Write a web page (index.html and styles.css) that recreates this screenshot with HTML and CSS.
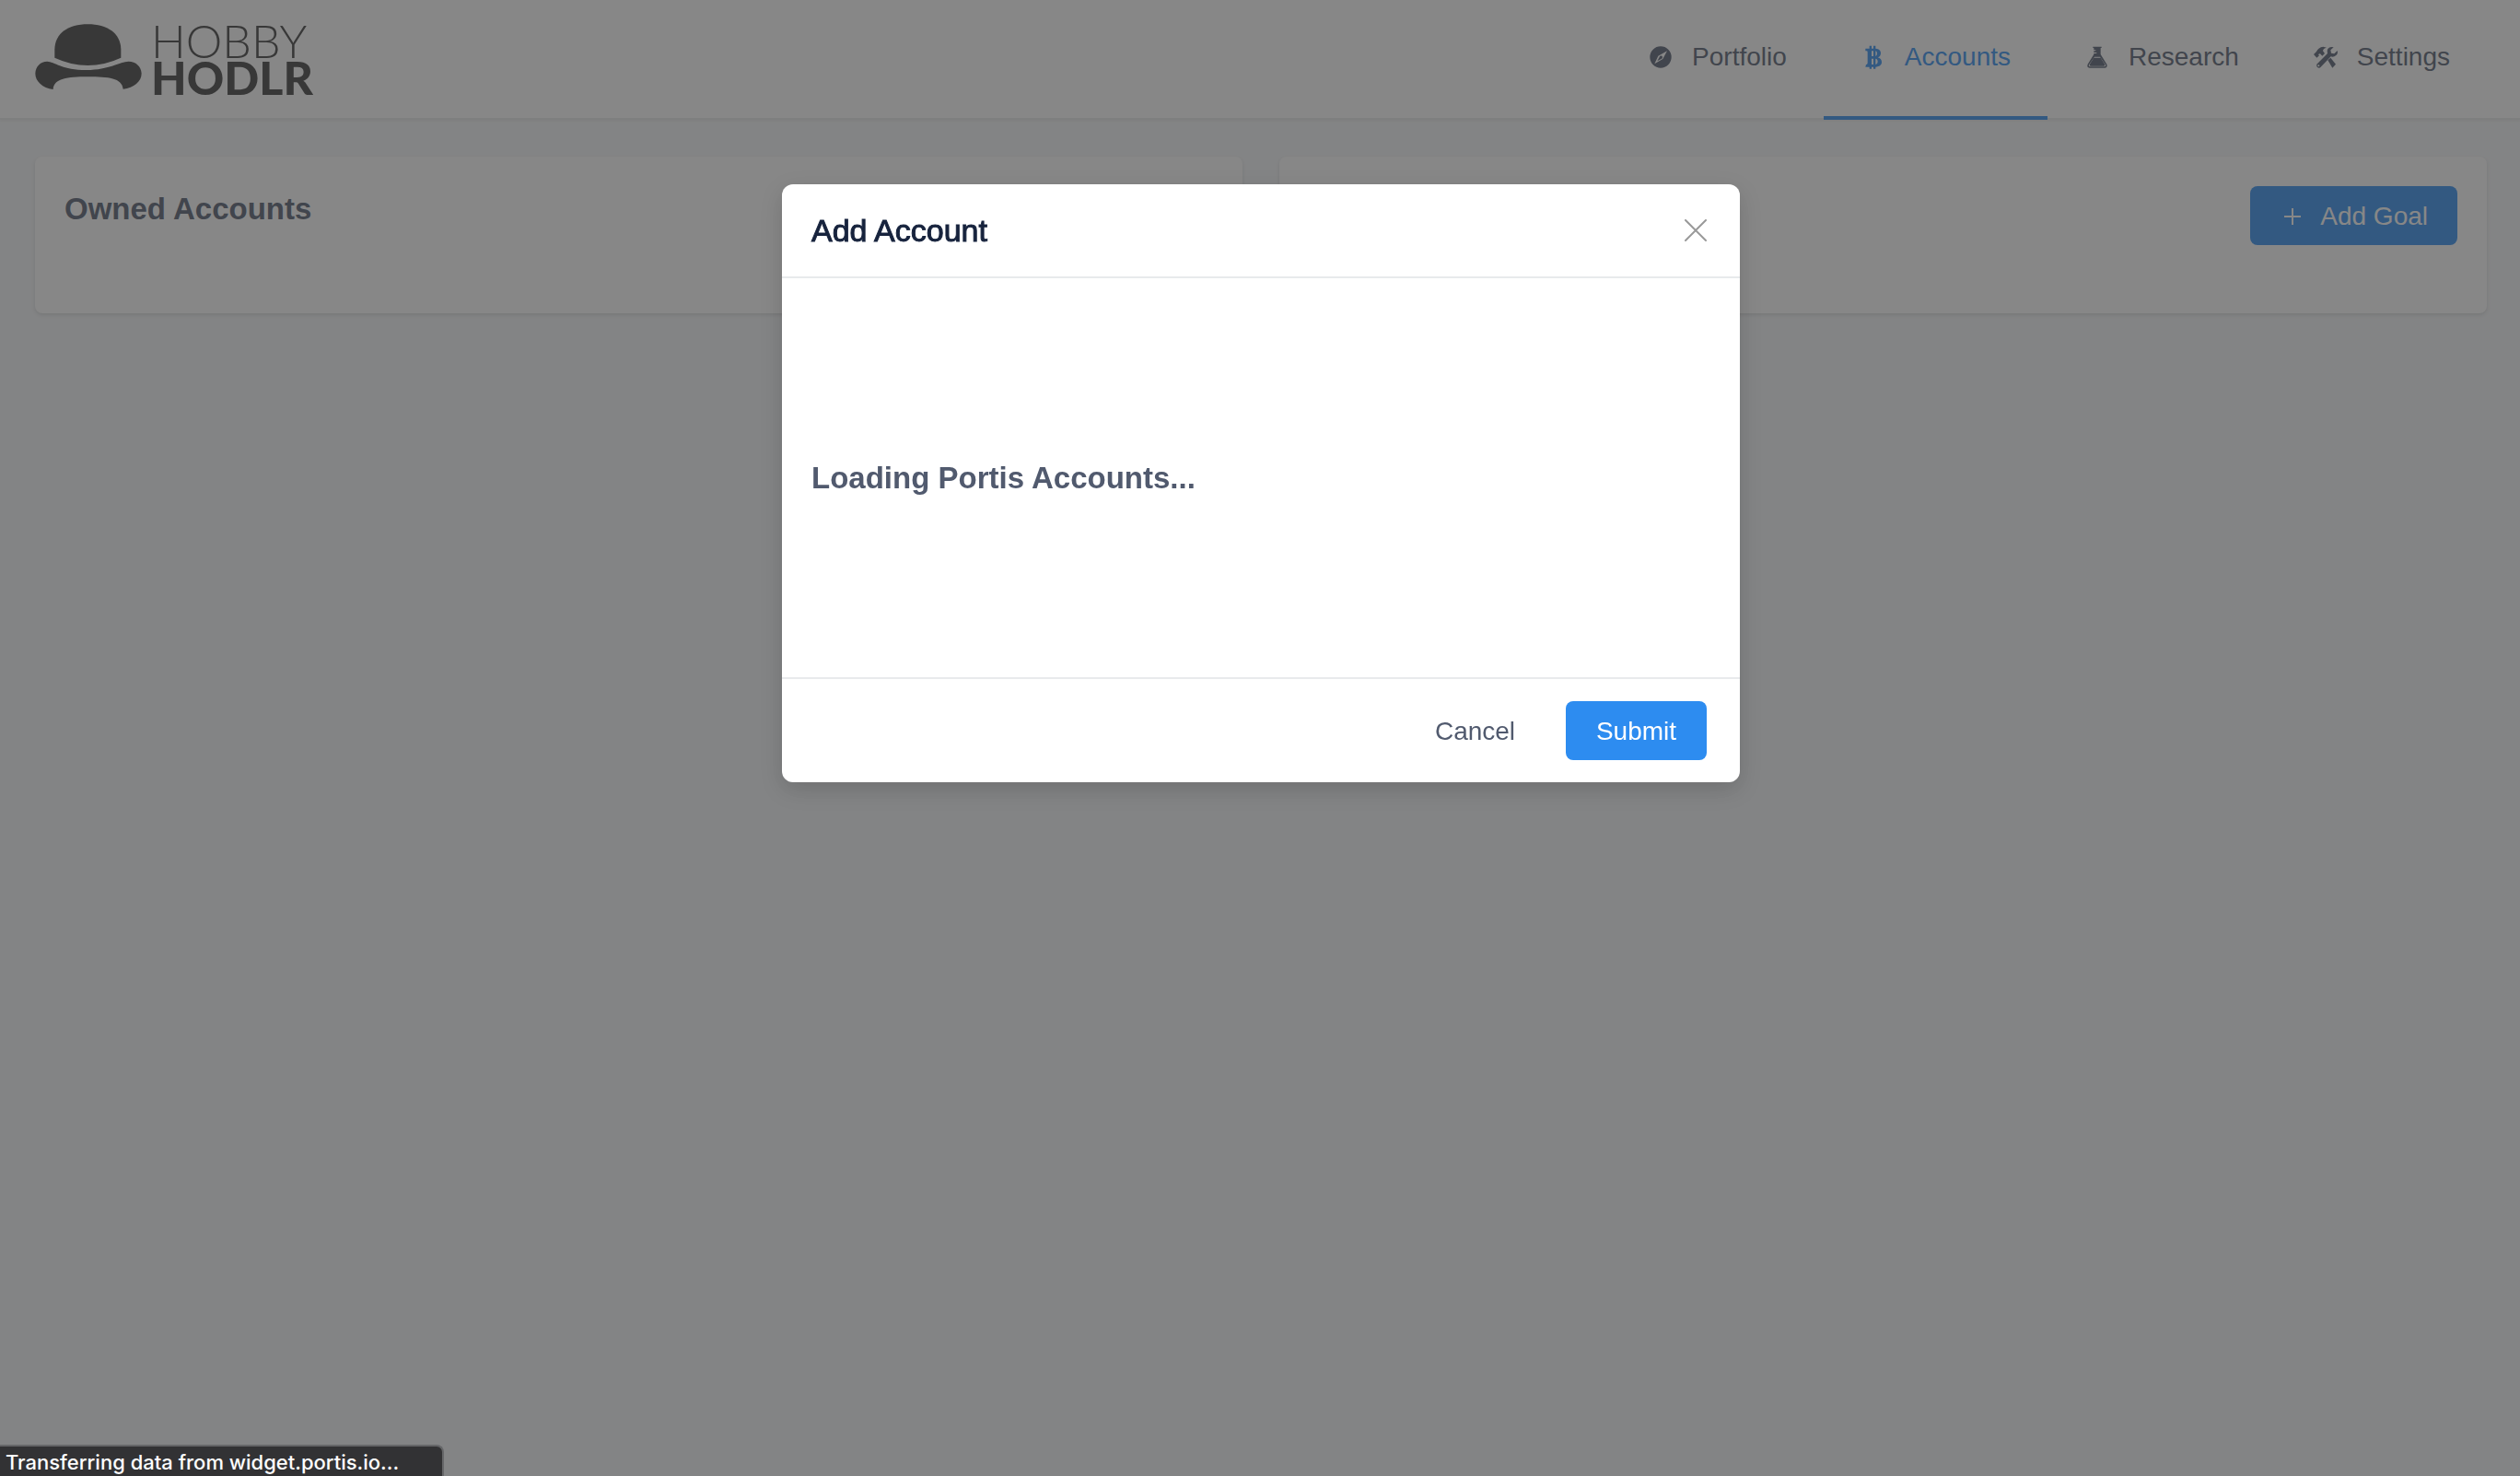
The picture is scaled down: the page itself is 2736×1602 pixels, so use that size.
FILE: index.html
```html
<!DOCTYPE html>
<html lang="en">
<head>
<meta charset="utf-8">
<title>Hobby Hodlr - Accounts</title>
<link rel="stylesheet" href="styles.css">
</head>
<body>
<header class="header">
  <a class="logo" href="#">
    <svg class="logo-hat" viewBox="0 0 348 216" aria-hidden="true">
      <path d="M64 110V82C66 30 108 1 172 1S278 30 280 82V110Q226 135 172 135T64 110Z"/>
      <path d="M59 213C25 208 1 187 1 161C2 138 18 122 40 122C62 123 90 150 167 150C244 149 275 123 305 122C328 122 346 138 347 161C347 187 322 208 287 212C283 176 240 172 172 172S62 178 59 213Z"/>
    </svg>
    <span class="logo-text">
      <span class="logo-light">HOBBY</span>
      <span class="logo-heavy">HODLR</span>
    </span>
  </a>
  <nav class="nav">
    <a class="nav-item" href="#">
      <svg class="icon" viewBox="0 0 84 84" aria-hidden="true"><path fill-rule="evenodd" d="M42 7A35 35 0 1 1 42 77A35 35 0 1 1 42 7ZM63 22L34 38L22 64L49 48ZM31 55L38 42A5 5 0 1 1 45 47Z"/></svg>
      <span>Portfolio</span>
    </a>
    <a class="nav-item nav-item-active" href="#" aria-current="page">
      <svg class="icon" viewBox="0 0 84 84" aria-hidden="true"><path fill-rule="evenodd" d="M16 14H29V5H36V14H42V5H49V14C61 15 66 21 66 29C66 36 62 41 56 43C64 45 69 50 69 58C69 68 62 73 49 74V80H42V74H36V80H29V74H16L18 66H20Q23 65 23 61V26Q23 22 20 22H16ZM36 22V39H42V22ZM49 22V39Q54 38 54 30Q54 23 49 22ZM36 47V66H42V47ZM49 47V66Q56 65 56 57Q56 48 49 47Z"/></svg>
      <span>Accounts</span>
    </a>
    <a class="nav-item" href="#">
      <svg class="icon" viewBox="0 0 84 84" aria-hidden="true"><path fill-rule="evenodd" d="M28 8H56V12H53V33L73 65Q77 77 66 77H18Q7 77 11 65L31 33V30H40V27H31V22H37V19H31V12H28ZM33 41L15 67Q13 73 19 73H65Q71 73 69 67L51 41Z"/><path d="M31 44H53L67 66Q68 71 63 71H21Q16 71 17 66Z"/></svg>
      <span>Research</span>
    </a>
    <a class="nav-item" href="#">
      <svg class="icon" viewBox="0 0 84 84" aria-hidden="true"><path d="M3 33L12 24Q18 10 34 8L45 11Q34 13 33 22L39 30L31 38L24 31Q20 31 18 34L21 37L13 44Z"/><path d="M49 52L58 44L75 65L64 77Z"/><path fill-rule="evenodd" d="M68 10Q56 6 49 15Q45 22 48 30L13 65Q11 72 16 76Q22 79 26 74L59 40Q68 43 76 36Q83 30 80 21L70 31L60 29L58 19ZM19 67A3 3 0 1 1 19 73A3 3 0 1 1 19 67Z"/></svg>
      <span>Settings</span>
    </a>
  </nav>
</header>

<main class="content">
  <section class="card">
    <h2 class="heading">Owned Accounts</h2>
  </section>
  <section class="card card-actions">
    <button class="btn btn-primary" type="button">
      <svg class="icon" viewBox="0 0 28 28" aria-hidden="true"><path d="M13 5H15V13H23V15H15V23H13V15H5V13H13Z"/></svg>
      <span>Add Goal</span>
    </button>
  </section>
</main>

<div class="overlay">
  <div class="modal" role="dialog" aria-modal="true" aria-labelledby="modal-title">
    <div class="modal-header">
      <h1 class="modal-title" id="modal-title">Add Account</h1>
      <button class="modal-close" type="button" aria-label="Close">
        <svg viewBox="0 0 24 24" aria-hidden="true"><path d="M1 1L23 23M23 1L1 23"/></svg>
      </button>
    </div>
    <div class="modal-body">
      <h2 class="heading">Loading Portis Accounts...</h2>
    </div>
    <div class="modal-footer">
      <button class="btn btn-text" type="button">Cancel</button>
      <button class="btn btn-primary" type="button">Submit</button>
    </div>
  </div>
</div>

<div class="status" role="status">Transferring data from widget.portis.io...</div>
</body>
</html>
```

FILE: styles.css
```css
* {
  box-sizing: border-box;
}

body {
  margin: 0;
  min-height: 100vh;
  background: #f5f7f9;
  color: #515a6e;
  font: 28px/42px "Liberation Sans", Arial, sans-serif;
}

h1,
h2 {
  margin: 0;
}

button {
  border: 0;
  background: none;
  font: inherit;
  cursor: pointer;
}

/* Header */
.header {
  display: flex;
  justify-content: space-between;
  align-items: flex-start;
  padding: 0 36px 0 38px;
  background: #fff;
  box-shadow: inset 0 -2px #e8eaec, 0 2px 2px rgba(0, 0, 0, 0.04);
}

.logo {
  display: flex;
  align-items: flex-start;
  gap: 10px;
  padding-top: 24px;
  color: #3a3a3a;
  text-decoration: none;
}

.logo-hat {
  width: 116px;
  height: 72px;
  margin-top: 2px;
  fill: currentColor;
}

.logo-text {
  display: flex;
  flex-direction: column;
  font-family: Lato, sans-serif;
  font-size: 50px;
  line-height: 40px;
}

.logo-light {
  font-weight: 300;
}

.logo-heavy {
  font-weight: 900;
}

.nav {
  display: flex;
}

.nav-item {
  display: flex;
  align-items: center;
  gap: 20px;
  padding: 0 40px 2px;
  border-bottom: 4px solid transparent;
  color: #515a6e;
  line-height: 124px;
  text-decoration: none;
}

.nav-item-active {
  border-color: #2d8cf0;
  color: #2d8cf0;
}

.icon {
  width: 28px;
  height: 28px;
  fill: currentColor;
}

/* Cards */
.content {
  display: grid;
  grid-template-columns: 1fr 1fr;
  gap: 40px;
  padding: 40px 36px 40px 38px;
}

.card {
  padding: 32px 32px 74px;
  border-radius: 8px;
  background: #fff;
  box-shadow: 0 2px 4px rgba(0, 0, 0, 0.12);
}

.card-actions {
  display: flex;
  justify-content: flex-end;
}

.heading {
  font-size: 33px;
  line-height: 49px;
}

.btn {
  display: flex;
  justify-content: center;
  align-items: center;
  gap: 16px;
  height: 64px;
  padding: 2px 32px 0;
  border-radius: 8px;
}

.btn-primary {
  background: #2d8cf0;
  color: #fff;
}

.btn-text {
  color: #515a6e;
}

/* Modal */
.overlay {
  position: fixed;
  inset: 0;
  display: flex;
  justify-content: center;
  align-items: flex-start;
  padding: 200px 0 0 2px;
  background: rgba(55, 55, 55, 0.6);
}

.modal {
  width: 1040px;
  max-width: 100%;
  border-radius: 12px;
  background: #fff;
  box-shadow: 0 8px 24px rgba(0, 0, 0, 0.15);
}

.modal-header {
  display: flex;
  justify-content: space-between;
  align-items: center;
  padding: 28px 36px 28px 32px;
  border-bottom: 2px solid #e8eaec;
}

.modal-title {
  color: #17233d;
  font-size: 34px;
  font-weight: 400;
  line-height: 44px;
  -webkit-text-stroke: 1px #17233d;
}

.modal-close {
  display: flex;
  padding: 0;
}

.modal-close svg {
  width: 24px;
  height: 24px;
  fill: none;
  stroke: #999;
  stroke-width: 2;
  stroke-linecap: round;
}

.modal-body {
  padding: 192px 32px;
}

.modal-footer {
  display: flex;
  justify-content: flex-end;
  gap: 22px;
  padding: 24px 36px;
  border-top: 2px solid #e8eaec;
}

.modal-footer .btn {
  min-width: 153px;
}

/* Browser status bubble */
.status {
  position: fixed;
  left: 0;
  bottom: 0;
  width: 482px;
  padding: 3px 0 0 6px;
  border: solid #656668;
  border-width: 2px 2px 0 0;
  border-radius: 0 8px 0 0;
  background: #323234;
  color: #fff;
  font: 500 22px/29px Inter, sans-serif;
}
```
